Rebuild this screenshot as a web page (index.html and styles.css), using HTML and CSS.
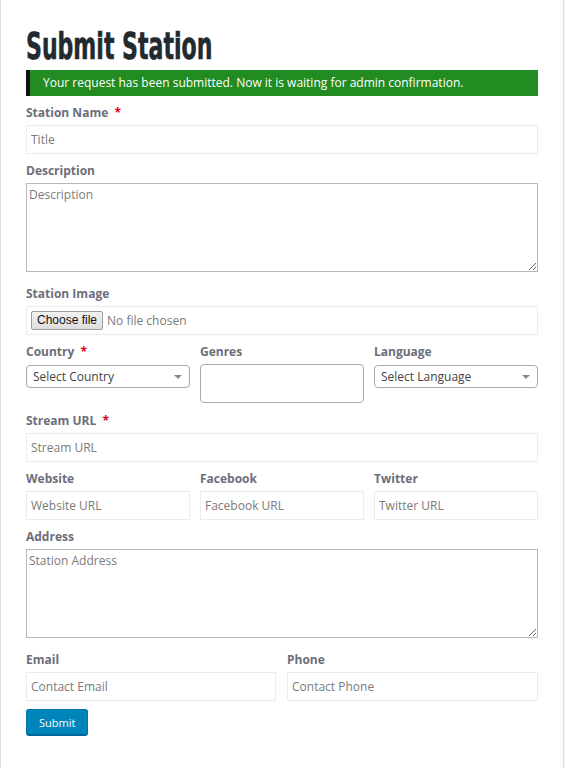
FILE: index.html
```html
<!DOCTYPE html>
<html lang="en">
<head>
<meta charset="utf-8">
<title>Submit Station</title>
<link rel="stylesheet" href="styles.css">
</head>
<body>
<div class="page">
  <h1 class="title">Submit Station</h1>
  <div class="notice">Your request has been submitted. Now it is waiting for admin confirmation.</div>
  <form class="form">
    <div class="field">
      <label class="label">Station Name <span class="req">*</span></label>
      <input class="input" type="text" placeholder="Title">
    </div>
    <div class="field field-area">
      <label class="label">Description</label>
      <textarea class="area" placeholder="Description"></textarea>
    </div>
    <div class="field">
      <label class="label">Station Image</label>
      <div class="filebox"><button type="button" class="filebtn">Choose file</button><span class="filetext">No file chosen</span></div>
    </div>
    <div class="row3 row-tall">
      <div class="field">
        <label class="label">Country <span class="req">*</span></label>
        <div class="select"><span>Select Country</span><i class="arrow"></i></div>
      </div>
      <div class="field">
        <label class="label">Genres</label>
        <div class="multi"></div>
      </div>
      <div class="field">
        <label class="label">Language</label>
        <div class="select"><span>Select Language</span><i class="arrow"></i></div>
      </div>
    </div>
    <div class="field">
      <label class="label">Stream URL <span class="req">*</span></label>
      <input class="input" type="text" placeholder="Stream URL">
    </div>
    <div class="row3">
      <div class="field">
        <label class="label">Website</label>
        <input class="input" type="text" placeholder="Website URL">
      </div>
      <div class="field">
        <label class="label">Facebook</label>
        <input class="input" type="text" placeholder="Facebook URL">
      </div>
      <div class="field">
        <label class="label">Twitter</label>
        <input class="input" type="text" placeholder="Twitter URL">
      </div>
    </div>
    <div class="field field-area">
      <label class="label">Address</label>
      <textarea class="area" placeholder="Station Address"></textarea>
    </div>
    <div class="row2">
      <div class="field">
        <label class="label">Email</label>
        <input class="input" type="text" placeholder="Contact Email">
      </div>
      <div class="field">
        <label class="label">Phone</label>
        <input class="input" type="text" placeholder="Contact Phone">
      </div>
    </div>
    <button type="button" class="submit">Submit</button>
  </form>
</div>
</body>
</html>
```
FILE: styles.css
```css
* { box-sizing: border-box; }
html, body { margin: 0; padding: 0; }
body {
  background: #f4f4f4;
  font-family: "Open Sans", "Liberation Sans", Arial, sans-serif;
  font-size: 12px;
  color: #555;
}
.page {
  width: 564px;
  min-height: 768px;
  background: #fff;
  border-left: 1px solid #dcdcdc;
  border-right: 1px solid #dcdcdc;
  padding: 24px 25px 0 25px;
}
.title {
  margin: 0;
  font-family: "DejaVu Sans Condensed", "Liberation Sans", sans-serif;
  font-weight: 700;
  font-size: 38px;
  line-height: 44px;
  color: #22292f;
  transform: scaleX(0.645);
  transform-origin: left center;
  white-space: nowrap;
  -webkit-text-stroke: 0.6px #22292f;
}
.notice {
  margin-top: 2px;
  height: 26px;
  line-height: 26px;
  background: #228b22;
  border-left: 4px solid #111;
  color: #fff;
  font-size: 12px;
  padding-left: 13px;
}
.form {
  display: flex;
  flex-direction: column;
  padding-top: 8px;
}
.field {
  display: flex;
  flex-direction: column;
  margin-bottom: 8px;
}
.field-area { margin-bottom: 13px; }
.row-tall { margin-bottom: 1px; }
.label {
  font-weight: 700;
  font-size: 12px;
  line-height: 18px;
  color: #6b6e7b;
  margin-bottom: 3px;
}
.req { color: #e0001b; margin-left: 3px; }
.input {
  height: 29px;
  border: 1px solid #ececec;
  padding: 0 4px;
  font-family: "Open Sans", "Liberation Sans", sans-serif;
  font-size: 12px;
  color: #444;
  background: #fff;
  outline: none;
  width: 100%;
}
.input::placeholder, .area::placeholder { color: #7a7a7a; opacity: 1; }
.area {
  display: block;
  height: 89px;
  border: 1px solid #b8b8b8;
  padding: 2px;
  font-family: "Open Sans", "Liberation Sans", sans-serif;
  font-size: 12px;
  width: 100%;
  resize: vertical;
  outline: none;
}
.filebox {
  height: 29px;
  border: 1px solid #ececec;
  padding: 0 4px;
  display: flex;
  align-items: center;
  gap: 4px;
}
.filebtn {
  height: 19px;
  padding: 0 5px;
  font-family: "Liberation Sans", Arial, sans-serif;
  font-size: 12px;
  color: #111;
  background: linear-gradient(#f2f2f2, #dedede);
  border: 1px solid #9c9c9c;
  border-radius: 2px;
  line-height: 17px;
}
.filetext { color: #7a7a7a; font-size: 12px; }
.row3 {
  display: grid;
  grid-template-columns: 164px 164px 164px;
  column-gap: 10px;
}
.row2 {
  display: grid;
  grid-template-columns: 250px 251px;
  column-gap: 11px;
}
.select {
  height: 23px;
  border: 1px solid #aaa;
  border-radius: 4px;
  margin-top: 1px;
  padding: 0 6px;
  display: flex;
  align-items: center;
  justify-content: space-between;
  color: #444;
  font-size: 12px;
}
.arrow {
  width: 0;
  height: 0;
  border-left: 4px solid transparent;
  border-right: 4px solid transparent;
  border-top: 4px solid #888;
  margin-right: 1px;
}
.multi {
  height: 39px;
  border: 1px solid #aaa;
  border-radius: 4px;
}
.submit {
  align-self: flex-start;
  height: 26px;
  padding: 0 12px;
  background: #0085ba;
  border: 1px solid #0073aa;
  border-bottom-color: #006799;
  border-radius: 3px;
  box-shadow: 0 1px 0 #006799;
  color: #fff;
  font-family: "Open Sans", "Liberation Sans", sans-serif;
  font-size: 11px;
}
```
